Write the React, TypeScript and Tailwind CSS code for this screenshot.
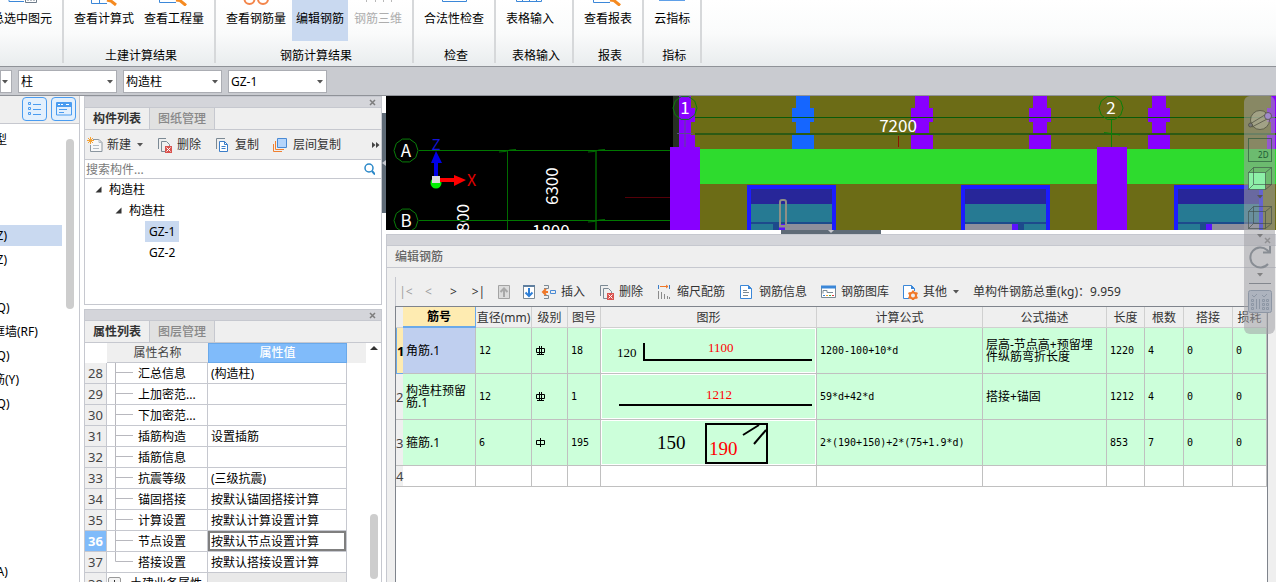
import type { ReactNode } from 'react';
import clsx from 'clsx';

const RIBBON_GROUPS = [
  {
    label: '',
    items: [{ name: '总选中图元', icon: 'calc' }],
  },
  {
    label: '土建计算结果',
    items: [
      { name: '查看计算式', icon: 'formula' },
      { name: '查看工程量', icon: 'search' },
    ],
  },
  {
    label: '钢筋计算结果',
    items: [
      { name: '查看钢筋量', icon: 'glasses' },
      { name: '编辑钢筋', icon: 'none', active: true },
      { name: '钢筋三维', icon: 'bars', disabled: true },
    ],
  },
  { label: '检查', items: [{ name: '合法性检查', icon: 'check' }] },
  { label: '表格输入', items: [{ name: '表格输入', icon: 'table' }] },
  { label: '报表', items: [{ name: '查看报表', icon: 'search' }] },
  { label: '指标', items: [{ name: '云指标', icon: 'cloud' }] },
];

const MODULES = [
  { name: '常用构件类型', heading: true },
  {},
  {},
  {},
  { name: '构造柱(Z)', selected: true },
  { name: '砌体柱(Z)' },
  {},
  { name: '剪力墙(Q)' },
  { name: '人防门框墙(RF)' },
  { name: '砌体墙(Q)' },
  { name: '砌体加筋(Y)' },
  { name: '保温墙(Q)' },
  {},
  {},
  {},
  {},
  {},
  {},
  { name: '门联窗(A)' },
];

const PROPERTIES = [
  { no: 28, name: '汇总信息', value: '(构造柱)' },
  { no: 29, name: '上加密范...', value: '' },
  { no: 30, name: '下加密范...', value: '' },
  { no: 31, name: '插筋构造', value: '设置插筋' },
  { no: 32, name: '插筋信息', value: '' },
  { no: 33, name: '抗震等级', value: '(三级抗震)' },
  { no: 34, name: '锚固搭接', value: '按默认锚固搭接计算' },
  { no: 35, name: '计算设置', value: '按默认计算设置计算' },
  { no: 36, name: '节点设置', value: '按默认节点设置计算' },
  { no: 37, name: '搭接设置', value: '按默认搭接设置计算' },
];

const REBAR_COLUMNS = [
  { title: '直径(mm)', width: 'w-[56px]' },
  { title: '级别', width: 'w-[36px]' },
  { title: '图号', width: 'w-[33px]' },
  { title: '图形', width: '' },
  { title: '计算公式', width: 'w-[166px]' },
  { title: '公式描述', width: 'w-[124px]' },
  { title: '长度', width: 'w-[38px]' },
  { title: '根数', width: 'w-[39px]' },
  { title: '搭接', width: 'w-[49px]' },
  { title: '损耗', width: 'w-[34px]' },
];

const REBARS = [
  {
    name: '角筋.1',
    diameter: '12',
    level: 'C',
    shapeNo: '18',
    formula: '1200-100+10*d',
    desc: '层高-节点高+预留埋件纵筋弯折长度',
    length: '1220',
    count: '4',
  },
  {
    name: '构造柱预留筋.1',
    diameter: '12',
    level: 'C',
    shapeNo: '1',
    formula: '59*d+42*d',
    desc: '搭接+锚固',
    length: '1212',
    count: '4',
  },
  {
    name: '箍筋.1',
    diameter: '6',
    level: 'A',
    shapeNo: '195',
    formula: '2*(190+150)+2*(75+1.9*d)',
    desc: '',
    length: '853',
    count: '7',
  },
];

const RibbonIcon = ({ type }: { type: string }) => (
  <svg width="32" height="6" fill="none" aria-hidden="true">
    {type === 'calc' && (
      <>
        <path d="M3 0v1.5h15" stroke="#3b87d8" />
        <path d="M19.5 0v2.5h11V0M22 0v1M25 0v1M28 0v1" stroke="#6f7d8b" />
      </>
    )}
    {type === 'formula' && (
      <>
        <path d="M3.5 0v3.5H19M11.500 0v3" stroke="#3b87d8" />
        <path d="M19 0l4 1 5 4" stroke="#f58a20" strokeWidth="3" />
      </>
    )}
    {type === 'search' && (
      <>
        <path d="M1.500 0v2.500H18" stroke="#3b87d8" />
        <path d="M18 0l4 .5 6 5" stroke="#f58a20" strokeWidth="3" />
      </>
    )}
    {type === 'glasses' && (
      <>
        <circle cx="9.500" cy="-1" r="5" stroke="#f3854a" strokeWidth="2" />
        <circle cx="23" cy="-1" r="5" stroke="#f3854a" strokeWidth="2" />
      </>
    )}
    {type === 'bars' && (
      <path d="M4.500 0v2M13.500 0v2M21.500 0v2M29.500 0v2" stroke="#b9b9b9" />
    )}
    {type === 'check' && <path d="M4.500 0v1.500h24V0" stroke="#3b87d8" />}
    {type === 'table' && (
      <path
        d="M2.500 0v1.500h25V0M8.500 0v1M15.500 0v1M22.500 0v1"
        stroke="#3b87d8"
      />
    )}
    {type === 'cloud' && <path d="M3 0h26" stroke="#5fa0e8" strokeWidth="2" />}
  </svg>
);

const Caret = ({ className }: { className?: string }) => (
  <svg width="6" height="4" className={className} aria-hidden="true">
    <path d="M0 0h6L3 3.500z" fill="#555" />
  </svg>
);

const Ribbon = () => (
  <header className="flex h-[67px] shrink-0 border-b border-[#8f9298] bg-linear-to-b from-white via-[#fafbfb] to-[#e9ecee]">
    {RIBBON_GROUPS.map((group, i) => (
      <div
        key={i}
        className={clsx(
          'flex h-[63px] flex-col border-r-2 border-[#d6d8da]',
          i === 0 && 'w-[64px] items-end overflow-hidden',
        )}
      >
        <div className="flex gap-0.5 px-1.5">
          {group.items.map((item) => (
            <button
              key={item.name}
              disabled={item.disabled}
              className={clsx(
                'flex h-[41px] flex-col items-center px-1 whitespace-nowrap',
                item.active && 'bg-[#c9d9f0]',
                item.disabled && 'text-[#adadad]',
              )}
            >
              <RibbonIcon type={item.icon} />
              <span className="mt-[5px] leading-4">{item.name}</span>
            </button>
          ))}
        </div>
        <div className="mt-[7px] pr-3 pl-4 text-center leading-4">
          {group.label}
        </div>
      </div>
    ))}
  </header>
);

const FilterSelect = ({ label, value }: { label: string; value: string }) => (
  <div className="relative w-[99px]">
    <select
      aria-label={label}
      className="block h-[23px] w-full appearance-none border border-[#abadb3] bg-white pt-px pl-0.5 leading-5"
    >
      <option>{value}</option>
    </select>
    <Caret className="pointer-events-none absolute top-2.5 right-1" />
  </div>
);

const FilterBar = () => (
  <div className="flex h-[29px] shrink-0 items-center gap-1.5 overflow-hidden border-b border-[#8f9298] bg-[#c9cbd0]">
    <div className="flex w-3 justify-end">
      <FilterSelect label="楼层" value="" />
    </div>
    <FilterSelect label="构件类别" value="柱" />
    <FilterSelect label="构件类型" value="构造柱" />
    <FilterSelect label="构件" value="GZ-1" />
  </div>
);

const ModuleNav = () => (
  <nav className="flex w-20 shrink-0 flex-col border-r border-[#c6c8cf] bg-white">
    <div className="flex h-7 shrink-0 justify-end gap-1 border-b border-[#c6c8cf] bg-[#efefef] pt-px pr-[3px]">
      <button
        aria-label="列表"
        className="flex h-6 w-[25px] items-center justify-center rounded border border-[#4a9cf0] bg-[#e3f0fd]"
      >
        <svg width="13" height="14" fill="none" stroke="#4a9cf0">
          <path d="M.5.5h2v2h-2zM.5 5.500h2v2h-2zM.5 10.500h2v2h-2zM5 2.500h8M5 7.500h8M5 12.500h8" />
        </svg>
      </button>
      <button
        aria-label="窗口"
        className="flex h-6 w-[25px] items-center justify-center rounded border border-[#4a9cf0] bg-[#e3f0fd]"
      >
        <svg width="16" height="14" fill="none">
          <path d="M.5.500h15v12.500H.5z" stroke="#4a9cf0" />
          <path d="M1 1h14v4H1z" fill="#4a9cf0" />
          <path d="M2 2.500h2M5 2.500h2M10 2.500h3" stroke="#fff" />
          <path d="M3 7.500h8M3 10.500h5" stroke="#4a9cf0" />
        </svg>
      </button>
    </div>
    <div className="flex min-h-0 flex-1 overflow-hidden">
      <ul className="w-[62px] shrink-0 overflow-hidden pt-[3px]">
        {MODULES.map((item, i) => (
          <li key={i} className="flex h-6 items-center">
            {item.name && (
              <a
                href="#"
                className={clsx(
                  'h-[21px] w-full pt-px leading-5 whitespace-nowrap',
                  item.heading ? '-indent-[65px]' : '-indent-[43px]',
                  item.selected && 'bg-[#c9d9f0]',
                )}
              >
                {item.name}
              </a>
            )}
          </li>
        ))}
      </ul>
      <div className="mt-[15px] ml-1 h-[170px] w-2 rounded-full bg-[#cdcdcd]" />
    </div>
  </nav>
);

const PanelTitle = () => (
  <div className="flex h-[11px] shrink-0 items-center justify-end border-b border-[#c6c8cf] bg-[#d4d5da] pr-[5px]">
    <button aria-label="关闭">
      <svg width="7" height="7" stroke="#7d7d7d" strokeWidth="1.500">
        <path d="M1 1l5 5M6 1L1 6" />
      </svg>
    </button>
  </div>
);

const Tabs = ({ names }: { names: string[] }) => (
  <div
    role="tablist"
    className="flex h-[22px] shrink-0 border-b border-[#c6c8cf] bg-[#efefef]"
  >
    {names.map((name, i) => (
      <button
        key={name}
        role="tab"
        aria-selected={i === 0}
        className={clsx(
          'border-r border-[#c6c8cf] px-2 leading-5',
          i === 0
            ? 'font-bold text-[#333]'
            : 'bg-[#e1e1e1] font-medium text-[#888]',
        )}
      >
        {name}
      </button>
    ))}
  </div>
);

const ToolButton = ({
  icon,
  caret,
  children,
}: {
  icon: ReactNode;
  caret?: boolean;
  children: ReactNode;
}) => (
  <button className="flex shrink-0 items-center gap-1 whitespace-nowrap text-[#333]">
    <svg width="16" height="16" fill="none" aria-hidden="true">
      {icon}
    </svg>
    {children}
    {caret && <Caret className="ml-0.5" />}
  </button>
);

const DELETE_ICON = (
  <>
    <path d="M1.500 12V1.500H9" stroke="#7b8994" />
    <path d="M8 14.500H4.500v-10h5l3 3V9" stroke="#7b8994" />
    <path d="M8 9h7v7H8z" fill="#d9534f" />
    <path d="M9.500 10.500l4 4M13.500 10.500l-4 4" stroke="#fff" />
  </>
);

const TreeArrow = () => (
  <svg width="7" height="7" aria-hidden="true">
    <path d="M6.500.500v6h-6z" fill="#333" />
  </svg>
);

const ComponentPanel = () => (
  <section className="flex shrink-0 flex-col border border-[#c6c8cf] bg-white">
    <PanelTitle />
    <Tabs names={['构件列表', '图纸管理']} />
    <div className="flex h-[30px] items-center gap-3.5 border-b border-[#c6c8cf] bg-[#efefef] pl-0.5">
      <ToolButton
        caret
        icon={
          <>
            <path d="M6 2.500h6l3 3v9H3.500V8" stroke="#8b969f" fill="#f8f8f8" />
            <path d="M12 2.500v3h3M6 8.500h6M6 11.500h6" stroke="#b4bcc3" />
            <path d="M1 1l5 5M6 1L1 6M3.500 0v7M0 3.500h7" stroke="#f5a030" />
          </>
        }
      >
        新建
      </ToolButton>
      <ToolButton icon={DELETE_ICON}>删除</ToolButton>
      <ToolButton
        icon={
          <>
            <path d="M1.500 12V1.500H10" stroke="#7b8994" />
            <path d="M4.500 4.500h5l3 3v7h-8z" stroke="#3b7dc8" fill="#fff" />
            <path
              d="M9.500 4.500v3h3M6.500 9.500h4M6.500 11.500h4"
              stroke="#3b7dc8"
            />
          </>
        }
      >
        复制
      </ToolButton>
      <ToolButton
        icon={
          <>
            <path d="M.5 7v7.500H9" stroke="#f08030" />
            <path d="M2.500 4v8.500H11" stroke="#f08030" />
            <path d="M4.500 1.500h9v9h-9z" fill="#b5d5fb" stroke="#4a8ad4" />
          </>
        }
      >
        层间复制
      </ToolButton>
      <button aria-label="更多" className="mr-px ml-auto">
        <svg width="8" height="6" fill="#444">
          <path d="M0 0l3.500 3L0 6zM4 0l3.500 3L4 6z" />
        </svg>
      </button>
    </div>
    <div className="flex h-[19px] items-center border-b border-[#c6c8cf] pr-1.5">
      <input
        aria-label="搜索构件"
        placeholder="搜索构件..."
        className="min-w-0 flex-1 pt-px pl-px leading-4 outline-none placeholder:text-[#7a7a7a]"
      />
      <svg width="11" height="12" fill="none" stroke="#2b88c8">
        <circle cx="5" cy="5" r="4" strokeWidth="1.500" />
        <path d="M8 8l3 3.500" strokeWidth="2" />
      </svg>
    </div>
    <ul className="h-[125px] leading-[21px]">
      <li className="flex items-center gap-[7px] pl-[10px]">
        <TreeArrow />
        构造柱
      </li>
      <li className="flex items-center gap-[7px] pl-[30px]">
        <TreeArrow />
        构造柱
      </li>
      <li className="flex pl-[60px]">
        <span className="bg-[#c9d9f0] px-1">GZ-1</span>
      </li>
      <li className="flex pl-[60px]">
        <span className="px-1">GZ-2</span>
      </li>
    </ul>
  </section>
);

const PropertyPanel = () => (
  <section className="flex min-h-0 flex-1 flex-col border border-b-0 border-[#c6c8cf] bg-white">
    <PanelTitle />
    <Tabs names={['属性列表', '图层管理']} />
    <div className="flex min-h-0 flex-1 overflow-hidden">
      <table className="w-full flex-1 table-fixed border-separate border-spacing-0 self-start">
        <thead>
          <tr className="h-5 leading-[19px] text-[#444]">
            <th className="w-[22px]" />
            <th className="w-[101px] border-b border-[#c6c8cf] bg-[#efefef] p-0 font-normal">
              属性名称
            </th>
            <th className="w-[139px] border border-[#6aa9ea] bg-[#80bbfa] p-0 leading-[18px] font-medium text-white">
              属性值
            </th>
            <th className="bg-[#efefef]" />
          </tr>
        </thead>
        <tbody>
          {PROPERTIES.map(({ no, name, value }) => (
            <tr key={no} className="h-[21px] leading-[18px]">
              <th
                className={clsx(
                  'border-r border-b border-[#c6c8cf] p-0 text-[13px]',
                  no === 36
                    ? 'bg-[#80bbfa] font-bold text-white'
                    : 'bg-[#efefef] font-normal text-[#444]',
                )}
              >
                {no}
              </th>
              <td className="overflow-hidden border-r border-b border-[#c6c8cf] p-0 whitespace-nowrap">
                <div className="flex h-5 gap-[5px] pl-2">
                  <svg width="18" height="20" stroke="#b8b8be" fill="none">
                    <path
                      d={no === 37 ? 'M.5 0v9.500H18' : 'M.5 0v20M.5 9.500H18'}
                    />
                  </svg>
                  <span className="pt-0.5">{name}</span>
                </div>
              </td>
              <td
                className={clsx(
                  'border-r border-b border-[#c6c8cf] p-0 pt-0.5 pl-[3px]',
                  no === 36 && 'inset-ring-2 inset-ring-[#7f7f7f]',
                )}
              >
                {value}
              </td>
              <td />
            </tr>
          ))}
          <tr className="h-[21px] leading-5">
            <th className="border-r border-[#c6c8cf] bg-[#efefef] p-0 text-[13px] font-normal text-[#444]">
              38
            </th>
            <td className="border-r border-[#c6c8cf] p-0 whitespace-nowrap">
              <div className="flex items-center gap-[9px] pl-px">
                <button
                  aria-label="展开"
                  className="flex size-[13px] items-center justify-center rounded-xs border border-[#999] bg-[#f4f4f4]"
                >
                  <svg width="7" height="7" stroke="#333">
                    <path d="M0 3.500h7M3.500 0v7" />
                  </svg>
                </button>
                土建业务属性
              </div>
            </td>
            <td className="border-r border-[#c6c8cf] bg-[#e9e9e9]" />
            <td />
          </tr>
        </tbody>
      </table>
      <div className="flex w-[15px] shrink-0 flex-col items-center justify-between py-[3px]">
        <svg width="8" height="4">
          <path d="M0 4h8L4 0z" fill="#333" />
        </svg>
        <div className="h-[65px] w-2 rounded-full bg-[#cdcdcd]" />
      </div>
    </div>
  </section>
);

const AxisMark = ({ x, y, name }: { x: number; y: number; name: string }) => (
  <>
    <polygon
      points={Array.from({ length: 10 }, (_, i) => {
        const a = (Math.PI * i) / 5;
        return `${x + 12 * Math.cos(a)},${y + 12 * Math.sin(a)}`;
      }).join(' ')}
      fill="none"
      stroke="#0a7f0a"
    />
    <text x={x} y={y + 6} fontSize="17" textAnchor="middle" fill="#fff">
      {name}
    </text>
  </>
);

// stepped column seen from the front, x is its centre
const Column = ({ x, color }: { x: number; color: string }) => (
  <g fill={color}>
    <rect x={x - 7} y="0" width="14" height="53" />
    <rect x={x - 11} y="12" width="22" height="14" />
    <rect x={x - 11} y="39" width="22" height="14" />
  </g>
);

const WindowFrame = ({ x, mirror }: { x: number; mirror?: boolean }) => (
  <g
    transform={
      mirror ? `translate(${x + 89} 89) scale(-1 1)` : `translate(${x} 89)`
    }
  >
    <rect width="89" height="46" fill="#1c1cff" />
    <rect x="4" y="4" width="81" height="15" fill="#272699" />
    <rect x="4" y="19" width="81" height="18" fill="#267a93" />
    <rect x="4" y="37" width="81" height="9" fill="#1d4a8c" />
    <rect x="4" y="39" width="22" height="7" fill="#267a93" />
    <rect x="32" y="39" width="6" height="7" fill="#5a12ff" />
    <rect x="38" y="39" width="47" height="7" fill="#8e8e9c" />
  </g>
);

const ModelView = () => (
  <svg className="block h-[134px] min-w-0 flex-1 bg-black font-['Noto_Sans_CJK_SC',sans-serif]">
    <g stroke="#006a00" fill="none">
      <path d="M121.500 54v80" />
      <path d="M210 54v80" stroke="#004a00" strokeWidth="2" />
      <path d="M33 54.500h251" stroke="#007800" />
      <path d="M113 56l6-.5 5-1.500 6-.5M202 56l6-.5 5-1.500 6-.5M202 126l6-.5 5-1.500 6-.5" />
    </g>
    <path d="M239 101.500h45" stroke="#550008" />
    <AxisMark x={20} y={54.5} name="A" />
    <AxisMark x={20} y={124.5} name="B" />
    <g fill="#fff" fontSize="17">
      <text transform="translate(172 109) rotate(-90)">6300</text>
      <text transform="translate(83 136) rotate(-90)">800</text>
      <text x="146" y="141">
        1800
      </text>
    </g>
    <path d="M33 124.500h251" stroke="#007800" />
    <text x="50" y="54" fontSize="15" textAnchor="middle" fill="#1414d8">
      Z
    </text>
    <path d="M48 82V67h-3l5-12 6 12h-4v15z" fill="#0000e6" />
    <circle cx="50" cy="87" r="5.5" fill="#00f000" />
    <path d="M54 82h14v-3l12 5-12 6v-4H54z" fill="#f00" />
    <rect x="46" y="80" width="8" height="7" fill="#dcdcdc" />
    <text x="81" y="90" fontSize="16" fill="#e00000">
      X
    </text>

    <rect x="287" y="0" width="6" height="51" fill="#263022" />
    <rect x="305" y="0" width="100%" height="134" fill="#6c6c16" />
    <path d="M293 0h12v12h4v14h-4v13h4v12h-16z" fill="#8800ff" />
    <path d="M291 37.500h16M299 24v27" stroke="#5a4a90" />
    <Column x={417} color="#1566ff" />
    <Column x={536} color="#8800ff" />
    <Column x={654} color="#8800ff" />
    <Column x={773} color="#8800ff" />
    <Column x={892} color="#8800ff" />
    <path d="M309 21.500h600" stroke="#0a5a0a" />
    <path d="M309 38h600" stroke="#2c5a14" strokeWidth="2" />
    <path d="M725.500 24v27M718 36.500l7 1 9 1.500" stroke="#0a7f0a" />
    <AxisMark x={299} y={12} name="1" />
    <AxisMark x={725} y={12} name="2" />
    <path d="M512.500 40v11" stroke="#8a1500" />
    <text x="512" y="36" fontSize="17" textAnchor="middle" fill="#fff">
      7200
    </text>
    <rect x="305" y="53" width="100%" height="35" fill="#2edb2e" />
    <rect x="284" y="51" width="30" height="83" fill="#8800ff" />
    <rect x="711" y="51" width="30" height="83" fill="#8800ff" />
    <WindowFrame x={361} />
    <WindowFrame x={575} mirror />
    <WindowFrame x={788} />
    <path
      d="M394 130v-24q0-2 2-2h2q2 0 2 2v24zM393 130.500h11"
      stroke="#8f8f86"
      strokeWidth="2"
      fill="none"
    />
  </svg>
);

const CubeIcon = ({ face }: { face: string }) => (
  <svg width="24" height="24" fill="none" stroke="#3c4a44" strokeOpacity=".6">
    <path d="M.5 5.500h17v17H.5z" fill={face} />
    <path d="M.5 5.500l5-5h18l-6 5M23.500.500v17l-6 5M5.500.500v17h18M5.500 17.500l-5 5" />
  </svg>
);

const ViewToolbar = () => (
  <aside className="absolute top-0 right-px flex w-[31px] flex-col items-center rounded-md bg-[#a0a0a6]/55 pt-3 pb-5">
    <button aria-label="动态观察" className="h-6">
      <svg
        width="24"
        height="24"
        fill="none"
        stroke="#4a4a3c"
        strokeOpacity=".7"
      >
        <circle cx="12" cy="12" r="9.500" fill="#b4b49c" fillOpacity=".6" />
        <path d="M2 16L20 5M4 19L21 10" />
        <circle cx="2.500" cy="17" r="2" fill="#777" />
        <circle cx="20" cy="8" r="3.500" fill="#a08cc8" />
      </svg>
    </button>
    <button
      aria-label="二维视图"
      className="mt-1.5 flex h-6 w-6 items-end justify-end border border-[#2c5a3c]/70 pr-0.5 text-[8px] leading-3 text-[#1c5a34]"
    >
      2D
    </button>
    <button aria-label="三维视图" className="mt-[5px] h-6">
      <CubeIcon face="#8df0a8" />
    </button>
    <Caret className="mt-1 mb-[7px] shrink-0" />
    <button aria-label="线框" className="h-6">
      <CubeIcon face="none" />
    </button>
    <Caret className="mt-1 mb-[7px] shrink-0 opacity-60" />
    <button aria-label="旋转" className="h-6">
      <svg width="24" height="24" fill="none" stroke="#888d94" strokeWidth="2">
        <path d="M20 19A10 10 0 1 1 19 5l2 2" />
        <path d="M22 1v6.500h-7" />
      </svg>
    </button>
    <Caret className="mt-1 shrink-0 opacity-60" />
    <hr className="mt-1.5 mb-1.5 w-[22px] border-[#83878e]" />
    <button aria-label="显示设置" className="h-6">
      <svg width="24" height="24" fill="none" stroke="#8d96a4">
        <rect x=".5" y=".5" width="23" height="22" rx="2" fill="#adb3be" />
        <path d="M4 5l2 2 3-3M14 5l2 2 3-3M8.500 9v10M11.500 9v10" />
        <path d="M3.500 9.500h2v2h-2zM14.500 9.500h2v2h-2zM18.500 9.500h2v2h-2zM3.500 13.500h2v2h-2zM14.500 13.500h2v2h-2zM18.500 13.500h2v2h-2zM3.500 17.500h2v2h-2zM14.500 17.500h2v2h-2zM18.500 17.500h2v2h-2z" />
      </svg>
    </button>
  </aside>
);

const RebarToolbar = () => (
  <div className="ml-2 flex h-[38px] shrink-0 items-end">
    <div className="flex h-[29px] flex-1 items-center gap-3.5 border-l border-[#c6c8cf] text-[#333]">
      <div className="-mr-3.5 flex items-center text-center">
        <button className="w-5 text-[#a0a0a0]">|&lt;</button>
        <button className="w-[25px] text-[#a0a0a0]">&lt;</button>
        <button className="w-[25px]">&gt;</button>
        <button className="w-[25px]">&gt;|</button>
        <button aria-label="上移" className="flex w-[25px] justify-center">
          <svg width="12" height="14" fill="none">
            <path d="M.5.500h11v13H.5z" stroke="#a3a3a3" fill="#dcdcdc" />
            <path
              d="M6 12V4M2.500 7L6 3.500 9.500 7"
              stroke="#a8a8a8"
              strokeWidth="2"
            />
          </svg>
        </button>
        <button aria-label="下移" className="flex w-[25px] justify-center">
          <svg width="12" height="14" fill="none">
            <path d="M.5.500h11v13H.5z" stroke="#7b8994" fill="#fff" />
            <path d="M0 1h12" stroke="#5f7f9f" strokeWidth="2" />
            <path
              d="M6 3v8M2.500 7.500L6 11l3.500-3.500"
              stroke="#2f7fd6"
              strokeWidth="2"
            />
          </svg>
        </button>
      </div>
      <ToolButton
        icon={
          <>
            <path d="M3 1.500h4.500v3H3M3 14.500h4.500v-3H3" stroke="#7b8994" />
            <path d="M7 8H2M5 5L2 8l3 3" stroke="#f07828" strokeWidth="2" />
            <path d="M9.500 6.500h5v3h-5z" stroke="#4a8ad4" />
          </>
        }
      >
        插入
      </ToolButton>
      <ToolButton icon={DELETE_ICON}>删除</ToolButton>
      <ToolButton
        icon={
          <>
            <path d="M1.500 1v4M12.500 1v4" stroke="#3b7dc8" />
            <path d="M3 2.500h8M9 1l2 1.500L9 4" stroke="#f07828" />
            <path
              d="M1.500 7v8M4.500 8v7M7.500 10v5M10.500 12v3M12.500 13v2"
              stroke="#8b8b8b"
            />
          </>
        }
      >
        缩尺配筋
      </ToolButton>
      <ToolButton
        icon={
          <>
            <path d="M1.500 1.500h8l3 3v10h-11z" stroke="#3b87d8" fill="#fff" />
            <path d="M9 1v4h4z" fill="#3b87d8" />
            <path d="M4 6.500h4M4 8.500h6M4 11.500h5" stroke="#7b8994" />
          </>
        }
      >
        钢筋信息
      </ToolButton>
      <ToolButton
        icon={
          <>
            <path d="M.5 2.500h14v11H.5z" stroke="#7b8994" fill="#fff" />
            <path d="M0 3h15" stroke="#3b87d8" strokeWidth="3" />
            <path d="M2 9.500V6.500h4v2h6" stroke="#7b8994" />
            <path d="M2 11.500h2" stroke="#3b87d8" />
            <path d="M5 11.500h2" stroke="#f5a030" />
            <path d="M8 11.500h2" stroke="#40b040" />
            <path d="M11 11.500h2" stroke="#e04040" />
          </>
        }
      >
        钢筋图库
      </ToolButton>
      <ToolButton
        caret
        icon={
          <>
            <path d="M6 14.500H.5v-13h8l3 3V7" stroke="#3b87d8" fill="#fff" />
            <path d="M8 1v4h4z" fill="#3b87d8" />
            <circle
              cx="10"
              cy="11.500"
              r="3"
              stroke="#f07828"
              strokeWidth="2"
            />
            <path
              d="M10 6.500v2M10 14v2M5.500 9l2 1M12.500 13l2 1M5.500 14l2-1M12.500 10l2-1"
              stroke="#f07828"
              strokeWidth="2"
            />
          </>
        }
      >
        其他
      </ToolButton>
      <span className="whitespace-nowrap">单构件钢筋总重(kg)：9.959</span>
    </div>
  </div>
);

const LevelSymbol = ({ level }: { level: string }) => (
  <svg width="10" height="11" fill="none" stroke="#000" aria-label={level}>
    {level === 'A' ? (
      <path d="M.5 3.500h8v4h-8zM4.500 1v9" />
    ) : (
      <path d="M.5 3.500h8v4h-8zM3.500 1v8.500M5.500 1v8.500M1 9.500h7" />
    )}
  </svg>
);

const RebarShape = ({ index }: { index: number }) => (
  <svg
    width="214"
    height="45"
    fill="none"
    className="block font-['Liberation_Serif',serif]"
  >
    {index === 0 && (
      <>
        <text x="16" y="29" fontSize="13" fill="#000">
          120
        </text>
        <text x="107" y="24" fontSize="13" fill="#f00">
          1100
        </text>
        <path d="M43 15v17h168" stroke="#000" strokeWidth="2" />
      </>
    )}
    {index === 1 && (
      <>
        <text x="105" y="25" fontSize="13" fill="#f00">
          1212
        </text>
        <path d="M18 31h193" stroke="#000" strokeWidth="2" />
      </>
    )}
    {index === 2 && (
      <>
        <text x="56" y="29" fontSize="19" fill="#000">
          150
        </text>
        <text x="108" y="35" fontSize="19" fill="#f00">
          190
        </text>
        <rect
          x="105"
          y="4"
          width="61"
          height="39"
          stroke="#000"
          strokeWidth="2"
        />
        <path
          d="M142 15l16-10M153 24l12-14"
          stroke="#000"
          strokeWidth="2"
        />
      </>
    )}
  </svg>
);

const CELL = 'border-r border-b border-[#c0c0c0] px-[3px] py-0';
const MONO = "font-['DejaVu_Sans_Mono',monospace] text-[10px]";

const RebarTable = () => (
  <div className="mr-2 ml-2 flex-1 overflow-hidden border-t border-r border-l border-[#7f848c] bg-white">
    <table className="w-full table-fixed border-separate border-spacing-0">
      <thead>
        <tr className="h-[21px] leading-[18px]">
          <th className="w-[7px] border-b border-[#d4d4d4] bg-[#efefef] p-0" />
          <th className="w-[73px] border-r border-b-2 border-[#6aa9ea] bg-[#feebb1] p-0 pt-px font-bold">
            筋号
          </th>
          {REBAR_COLUMNS.map((col) => (
            <th
              key={col.title}
              className={clsx(
                'overflow-hidden border-r border-b border-[#d0d0d0] bg-[#efefef] p-0 pt-0.5 font-normal whitespace-nowrap text-[#333]',
                col.width,
              )}
            >
              {col.title}
            </th>
          ))}
        </tr>
      </thead>
      <tbody>
        {REBARS.map((row, i) => (
          <tr key={row.name} className="h-[46px] bg-[#ccffda] leading-3">
            <th
              className={clsx(
                'border-b p-0 text-[13px]',
                i === 0
                  ? 'border-l border-[#6aa9ea] bg-[#feebb1] font-bold'
                  : 'border-[#c0c0c0] bg-[#efefef] font-normal text-[#444]',
              )}
            >
              {i + 1}
            </th>
            <td className={clsx(CELL, i === 0 && 'bg-[#bfcfef]')}>
              {row.name}
            </td>
            <td className={clsx(CELL, MONO)}>{row.diameter}</td>
            <td className={clsx(CELL, 'pl-1')}>
              <LevelSymbol level={row.level} />
            </td>
            <td className={clsx(CELL, MONO)}>{row.shapeNo}</td>
            <td className="border-r border-b border-[#c0c0c0] p-0 inset-ring inset-ring-white">
              <RebarShape index={i} />
            </td>
            <td className={clsx(CELL, MONO)}>{row.formula}</td>
            <td className={clsx(CELL, 'pr-3')}>{row.desc}</td>
            <td className={clsx(CELL, MONO)}>{row.length}</td>
            <td className={clsx(CELL, MONO)}>{row.count}</td>
            <td className={clsx(CELL, MONO)}>0</td>
            <td className={clsx(CELL, MONO)}>0</td>
          </tr>
        ))}
        <tr className="h-[21px]">
          <th className="border-b border-[#c0c0c0] bg-[#efefef] p-0 text-[13px] leading-5 font-normal text-[#444]">
            4
          </th>
          <td className={CELL} />
          {REBAR_COLUMNS.map((col) => (
            <td key={col.title} className={CELL} />
          ))}
        </tr>
      </tbody>
    </table>
  </div>
);

const App = () => {
  return (
    <div className="flex h-screen flex-col overflow-hidden bg-white font-['Noto_Sans','Noto_Sans_CJK_SC',sans-serif] text-xs text-black">
      <Ribbon />
      <FilterBar />
      <div className="flex min-h-0 flex-1">
        <ModuleNav />
        <div className="ml-1 flex w-[298px] shrink-0 flex-col gap-1">
          <ComponentPanel />
          <PropertyPanel />
        </div>
        <main className="relative flex min-w-0 flex-1 flex-col">
          <div className="flex shrink-0">
            <div className="flex w-1 shrink-0 items-center">
              <div className="flex h-[100px] w-1 items-center bg-[#5f6b77]">
                <svg width="4" height="6">
                  <path d="M4 0v6L0 3z" fill="#c6c8cf" />
                </svg>
              </div>
            </div>
            <ModelView />
          </div>
          <div className="ml-1 flex h-1 shrink-0 justify-center">
            <div className="flex w-[100px] justify-center bg-[#5f6b77]">
              <svg width="6" height="3">
                <path d="M0 0h6L3 3z" fill="#c6c8cf" />
              </svg>
            </div>
          </div>
          <section className="ml-1 flex min-h-0 flex-1 flex-col border-t border-l border-[#c6c8cf] bg-[#efefef]">
            <PanelTitle />
            <h2 className="h-[22px] shrink-0 border-b border-[#c6c8cf] pt-px pl-2 leading-5 font-medium text-[#666]">
              编辑钢筋
            </h2>
            <RebarToolbar />
            <RebarTable />
          </section>
          <ViewToolbar />
        </main>
      </div>
    </div>
  );
};

export default App;
